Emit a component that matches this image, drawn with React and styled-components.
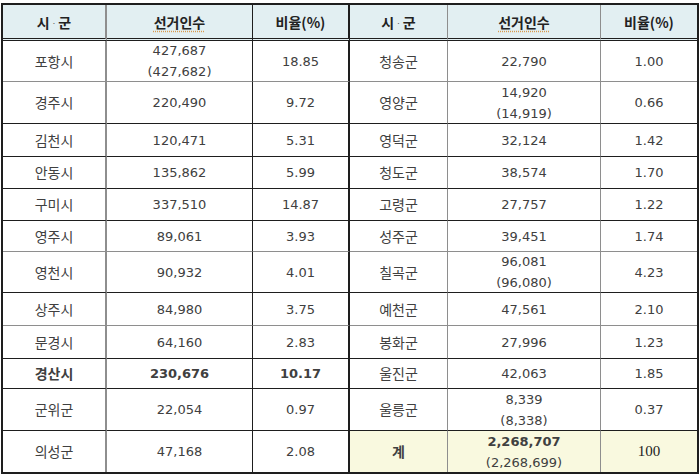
import React from "react";
import styled, { createGlobalStyle } from "styled-components";

const GlobalStyle = createGlobalStyle`
  * { box-sizing: border-box; }
  body {
    margin: 0;
    background: #ffffff;
  }
`;

const GRAY = "#8e8e8e";
const DARK = "#1e1e1e";

// right-hand line of each column
const colLines = [
  `2px solid ${GRAY}`,
  `1px solid ${DARK}`,
  `2px solid ${DARK}`,
  `1px solid ${GRAY}`,
  `1px solid ${GRAY}`,
  "none"
];

// bottom line of each body row
const rowLines = [
  `1px solid ${GRAY}`,
  `1px solid ${DARK}`,
  `1px solid ${DARK}`,
  `1px solid ${DARK}`,
  `1px solid ${DARK}`,
  `1px solid ${GRAY}`,
  `1px solid ${DARK}`,
  `1px solid ${GRAY}`,
  `1px solid ${DARK}`,
  `1px solid ${DARK}`,
  `1px solid ${DARK}`,
  "none"
];

const left = [
  { name: "포항시", count: "427,687", prev: "(427,682)", rate: "18.85" },
  { name: "경주시", count: "220,490", rate: "9.72" },
  { name: "김천시", count: "120,471", rate: "5.31" },
  { name: "안동시", count: "135,862", rate: "5.99" },
  { name: "구미시", count: "337,510", rate: "14.87" },
  { name: "영주시", count: "89,061", rate: "3.93" },
  { name: "영천시", count: "90,932", rate: "4.01" },
  { name: "상주시", count: "84,980", rate: "3.75" },
  { name: "문경시", count: "64,160", rate: "2.83" },
  { name: "경산시", count: "230,676", rate: "10.17", bold: true },
  { name: "군위군", count: "22,054", rate: "0.97" },
  { name: "의성군", count: "47,168", rate: "2.08" }
];

const right = [
  { name: "청송군", count: "22,790", rate: "1.00" },
  { name: "영양군", count: "14,920", prev: "(14,919)", rate: "0.66" },
  { name: "영덕군", count: "32,124", rate: "1.42" },
  { name: "청도군", count: "38,574", rate: "1.70" },
  { name: "고령군", count: "27,757", rate: "1.22" },
  { name: "성주군", count: "39,451", rate: "1.74" },
  { name: "칠곡군", count: "96,081", prev: "(96,080)", rate: "4.23" },
  { name: "예천군", count: "47,561", rate: "2.10" },
  { name: "봉화군", count: "27,996", rate: "1.23" },
  { name: "울진군", count: "42,063", rate: "1.85" },
  { name: "울릉군", count: "8,339", prev: "(8,338)", rate: "0.37" },
  { name: "계", count: "2,268,707", prev: "(2,268,699)", rate: "100", total: true }
];

const Frame = styled.div`
  margin: 3px 0 0 1px;
  width: 698px;
  border: 2px solid ${DARK};
  display: grid;
  grid-template-columns: 104px 146px 97px 98px 153px 96px;
  grid-template-rows: 36px 41px 42px 33px 32px 32px 31px 41px 33px 33px 30px 42px 41px;
  background: #ffffff;
`;

const Cell = styled.div`
  display: flex;
  flex-direction: column;
  align-items: center;
  justify-content: center;
  border-right: ${props => props.$vline};
  border-bottom: ${props => props.$hline};
  background: ${props => (props.$total ? "#f9f9df" : "transparent")};
  color: #404040;
  font-family: ${props =>
    props.$num
      ? '"DejaVu Sans", "Liberation Sans", sans-serif'
      : '"Noto Sans CJK KR", "Noto Sans", sans-serif'};
  font-size: ${props => (props.$num ? "13px" : "14px")};
  font-weight: ${props => (props.$bold ? 700 : 400)};
  line-height: 21px;
  white-space: nowrap;
`;

const HeadCell = styled.div`
  display: flex;
  align-items: center;
  justify-content: center;
  border-right: ${props => props.$vline};
  border-bottom: 3px double ${DARK};
  background: #e2eff2;
  color: #222222;
  font-family: "Noto Sans CJK KR", "Noto Sans", sans-serif;
  font-size: 14px;
  font-weight: 700;
  padding-top: 1px;
`;

const Dot = styled.span`
  font-size: 8px;
  font-weight: 400;
  margin: 0 2px;
  color: #555555;
`;

const Marked = styled.span`
  text-decoration: underline dotted #d99a4e;
  text-underline-offset: 3px;
`;

const SerifNum = styled.span`
  font-family: "Liberation Serif", serif;
  font-size: 15px;
  color: #222222;
`;

const Light = styled.span`
  font-weight: 400;
`;

function Heads({ offset }) {
  return (
    <>
      <HeadCell $vline={colLines[offset]}>
        시<Dot>·</Dot>군
      </HeadCell>
      <HeadCell $vline={colLines[offset + 1]}>
        <Marked>선거인수</Marked>
      </HeadCell>
      <HeadCell $vline={colLines[offset + 2]}>비율(%)</HeadCell>
    </>
  );
}

function Side({ row, i, offset }) {
  const hline = rowLines[i];
  return (
    <>
      <Cell $vline={colLines[offset]} $hline={hline} $bold={row.bold || row.total} $total={row.total}>
        {row.name}
      </Cell>
      <Cell $num $vline={colLines[offset + 1]} $hline={hline} $bold={row.bold || row.total} $total={row.total}>
        <span>{row.count}</span>
        {row.prev && <Light>{row.prev}</Light>}
      </Cell>
      <Cell $num $vline={colLines[offset + 2]} $hline={hline} $bold={row.bold} $total={row.total}>
        {row.total ? <SerifNum>{row.rate}</SerifNum> : row.rate}
      </Cell>
    </>
  );
}

export default function App() {
  return (
    <>
      <GlobalStyle />
      <Frame>
        <Heads offset={0} />
        <Heads offset={3} />
        {left.map((row, i) => (
          <React.Fragment key={row.name}>
            <Side row={row} i={i} offset={0} />
            <Side row={right[i]} i={i} offset={3} />
          </React.Fragment>
        ))}
      </Frame>
    </>
  );
}
